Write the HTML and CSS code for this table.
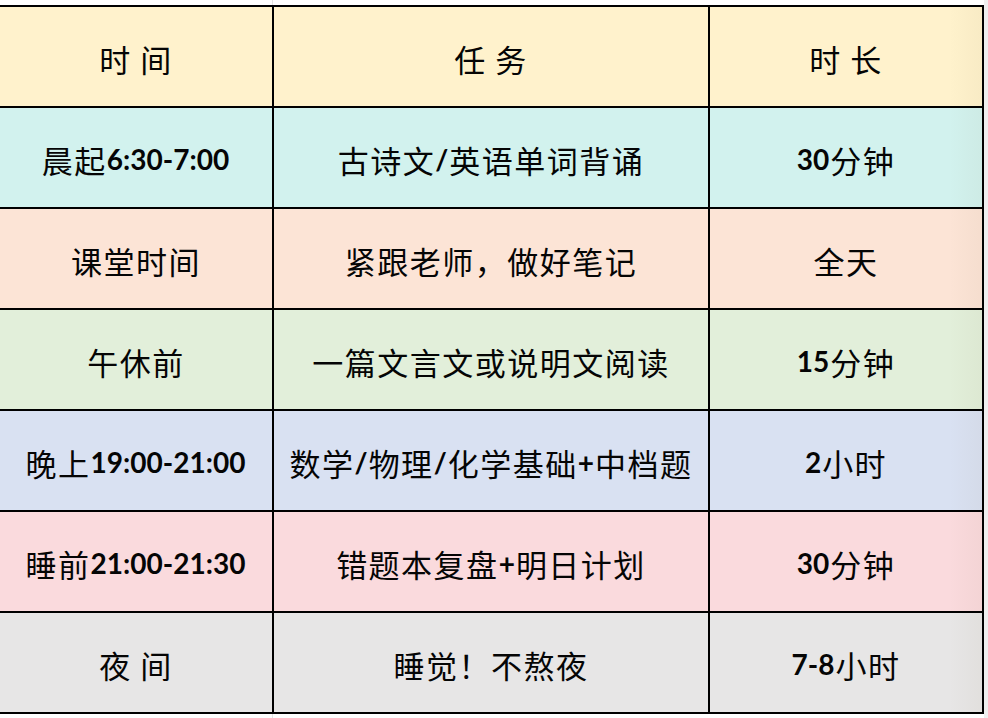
FILE: index.html
```html
<!DOCTYPE html>
<html lang="zh-CN">
<head>
<meta charset="utf-8">
<title>作息计划表</title>
<link rel="stylesheet" href="styles.css">
</head>
<body>
<div class="sheet">
  <div class="grid">
    <div class="cell r0">时 间</div>
    <div class="cell r0">任 务</div>
    <div class="cell r0 last">时 长</div>

    <div class="cell r1">晨起<span class="num">6:30-7:00</span></div>
    <div class="cell r1">古诗文<span class="num">/</span>英语单词背诵</div>
    <div class="cell r1 last"><span class="num">30</span>分钟</div>

    <div class="cell r2">课堂时间</div>
    <div class="cell r2">紧跟老师，做好笔记</div>
    <div class="cell r2 last">全天</div>

    <div class="cell r3">午休前</div>
    <div class="cell r3">一篇文言文或说明文阅读</div>
    <div class="cell r3 last"><span class="num">15</span>分钟</div>

    <div class="cell r4">晚上<span class="num">19:00-21:00</span></div>
    <div class="cell r4">数学<span class="num">/</span>物理<span class="num">/</span>化学基础<span class="num">+</span>中档题</div>
    <div class="cell r4 last"><span class="num">2</span>小时</div>

    <div class="cell r5">睡前<span class="num">21:00-21:30</span></div>
    <div class="cell r5">错题本复盘<span class="num">+</span>明日计划</div>
    <div class="cell r5 last"><span class="num">30</span>分钟</div>

    <div class="cell r6">夜 间</div>
    <div class="cell r6">睡觉！不熬夜</div>
    <div class="cell r6 last"><span class="num">7-8</span>小时</div>
  </div>
</div>
</body>
</html>
```

FILE: styles.css
```css
html, body {
  margin: 0;
  padding: 0;
  background: #ffffff;
}

.sheet {
  width: 988px;
  height: 718px;
  overflow: hidden;
  padding-top: 5px;
  box-sizing: border-box;
  background:
    linear-gradient(to right, transparent 272px, #e3e3e3 272px, #e3e3e3 273px, transparent 273px),
    linear-gradient(to right, transparent 984px, #efefef 984px);
}

.grid {
  display: grid;
  width: 984px;
  grid-template-columns: 272px 434px 272px;
  grid-auto-rows: 99px;
  gap: 2px;
  padding: 2px 2px 2px 0;
  box-sizing: border-box;
  background: #000000;
}

.cell {
  display: flex;
  align-items: center;
  justify-content: center;
  padding-top: 3px;
  box-sizing: border-box;
  font-family: "Noto Sans CJK SC", "Noto Sans CJK JP", sans-serif;
  font-size: 31px;
  font-weight: 400;
  letter-spacing: 1.5px;
  color: #050505;
  white-space: nowrap;
}

.num {
  font-family: "Lato", "Liberation Sans", sans-serif;
  font-weight: 700;
  font-size: 28px;
  letter-spacing: 0;
  margin-right: 1px;
}

.last {
  background-image: linear-gradient(to right, transparent 88%, rgba(120, 100, 60, 0.05));
}

.r0 { background-color: #fff2cc; }
.r1 { background-color: #d2f2ee; }
.r2 { background-color: #fce4d6; }
.r3 { background-color: #e2efda; }
.r4 { background-color: #d9e1f2; }
.r5 { background-color: #fadadd; }
.r6 { background-color: #e7e6e6; }
```
